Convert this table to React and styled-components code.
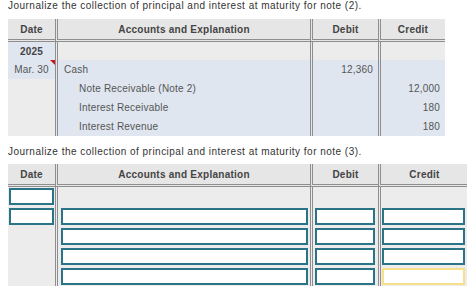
import React from "react";
import styled, { createGlobalStyle } from "styled-components";

const GlobalStyle = createGlobalStyle`
  html, body {
    margin: 0;
    padding: 0;
    background: #fff;
    overflow: hidden;
  }
  body {
    font-family: "Liberation Sans", Arial, sans-serif;
  }
`;

const Page = styled.div`
  padding: 0 8px;
`;

const Prompt = styled.div`
  font-size: 10px;
  letter-spacing: 0.48px;
  line-height: 12px;
  color: #333;
  white-space: nowrap;
  margin-bottom: ${(p) => p.gap}px;
`;

const Sheet = styled.table`
  border-collapse: separate;
  border-spacing: 0;
  table-layout: fixed;
  width: ${(p) => p.width}px;
  font-size: 10px;
  letter-spacing: 0.2px;
  color: #555;
  margin-bottom: 10px;
`;

const Head = styled.th`
  height: 20px;
  padding: 0;
  background: #e6e6e6;
  color: #444;
  font-weight: bold;
  letter-spacing: 0.25px;
  text-align: center;
  border-bottom: 3px double #8e8e8e;
  border-left: ${(p) => (p.first ? "none" : "3px double #8e8e8e")};
  white-space: nowrap;
`;

const Cell = styled.td`
  position: relative;
  height: ${(p) => p.h || 19}px;
  padding: 0 ${(p) => (p.align === "right" ? 5 : 6)}px 0 ${(p) => 6 + (p.indent || 0)}px;
  background: ${(p) => (p.blue ? "#dfe6f0" : "#ececec")};
  text-align: ${(p) => p.align || "left"};
  font-weight: ${(p) => (p.bold ? "bold" : "normal")};
  color: ${(p) => (p.bold ? "#444" : "#555")};
  border-left: ${(p) => (p.first ? "none" : "3px double #8e8e8e")};
  white-space: nowrap;
  vertical-align: middle;
`;

const InputCell = styled.td`
  height: ${(p) => p.h || 19}px;
  padding: ${(p) => p.top ?? 2}px ${(p) => p.r ?? 2}px 1px ${(p) => p.l ?? 2}px;
  background: #ececec;
  border-left: ${(p) => (p.first ? "none" : "3px double #8e8e8e")};
  vertical-align: top;
  box-sizing: border-box;
`;

const Field = styled.div`
  height: 17px;
  box-sizing: border-box;
  background: #fff;
  border: 2px solid ${(p) => (p.active ? "#f6e08c" : "#2b7488")};
`;

const Flag = styled.span`
  position: absolute;
  top: 0;
  right: 0;
  width: 0;
  height: 0;
  border-top: 5px solid #d0121b;
  border-left: 5px solid transparent;
`;

const Cols = ({ credit }) => (
  <colgroup>
    <col style={{ width: 47 }} />
    <col style={{ width: 255 }} />
    <col style={{ width: 68 }} />
    <col style={{ width: credit }} />
  </colgroup>
);

const HeaderRow = () => (
  <thead>
    <tr>
      <Head first>Date</Head>
      <Head>Accounts and Explanation</Head>
      <Head>Debit</Head>
      <Head>Credit</Head>
    </tr>
  </thead>
);

const lines = [
  { account: "Note Receivable (Note 2)", credit: "12,000" },
  { account: "Interest Receivable", credit: "180" },
  { account: "Interest Revenue", credit: "180" },
];

export default function App() {
  return (
    <>
      <GlobalStyle />
      <Page>
        <Prompt gap={7}>
          Journalize the collection of principal and interest at maturity for note (2).
        </Prompt>
        <Sheet width={437}>
          <Cols credit={67} />
          <HeaderRow />
          <tbody>
            <tr>
              <Cell first blue bold h={18} align="center">2025</Cell>
              <Cell h={18} />
              <Cell h={18} />
              <Cell h={18} />
            </tr>
            <tr>
              <Cell first blue align="center">
                Mar. 30
                <Flag />
              </Cell>
              <Cell blue>Cash</Cell>
              <Cell blue align="right">12,360</Cell>
              <Cell blue />
            </tr>
            {lines.map((l) => (
              <tr key={l.account}>
                <Cell first />
                <Cell blue indent={15}>{l.account}</Cell>
                <Cell blue />
                <Cell blue align="right">{l.credit}</Cell>
              </tr>
            ))}
          </tbody>
        </Sheet>

        <Prompt gap={6}>
          Journalize the collection of principal and interest at maturity for note (3).
        </Prompt>
        <Sheet width={460}>
          <Cols credit={90} />
          <HeaderRow />
          <tbody>
            <tr>
              <InputCell first h={18} top={1} l={1} r={1}>
                <Field />
              </InputCell>
              <InputCell h={18} />
              <InputCell h={18} />
              <InputCell h={18} />
            </tr>
            {[0, 1, 2, 3].map((i) => (
              <tr key={i}>
                <InputCell first l={1} r={1}>
                  {i === 0 && <Field />}
                </InputCell>
                <InputCell l={3} r={2}>
                  <Field />
                </InputCell>
                <InputCell l={2} r={3}>
                  <Field />
                </InputCell>
                <InputCell l={1} r={3}>
                  <Field active={i === 3} />
                </InputCell>
              </tr>
            ))}
          </tbody>
        </Sheet>
      </Page>
    </>
  );
}
